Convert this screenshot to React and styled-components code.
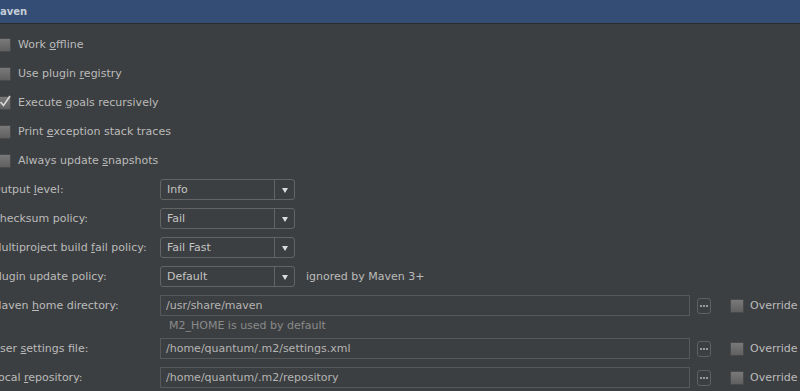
import React from "react";
import styled, { createGlobalStyle } from "styled-components";

const GlobalStyle = createGlobalStyle`
  html, body {
    margin: 0;
    padding: 0;
    background: #3c3f41;
    overflow: hidden;
  }
  body {
    font-family: "DejaVu Sans", "Liberation Sans", sans-serif;
    font-size: 11px;
    color: #bbbbbb;
  }
`;

const Page = styled.div`
  width: 800px;
  height: 391px;
  overflow: hidden;
  background: #3c3f41;
`;

const TitleBar = styled.div`
  height: 23px;
  background: #344d74;
  border-bottom: 1px solid #2a2c2e;
  display: flex;
  align-items: center;
`;

const Title = styled.span`
  margin-left: -10px;
  margin-top: -1px;
  font-weight: bold;
  font-size: 10px;
  color: #c6cdd8;
`;

const Content = styled.div`
  margin-left: -8px;
  padding-top: 6px;
`;

const CheckRow = styled.div`
  height: 29px;
  display: flex;
  align-items: center;
  gap: 7px;
  padding-left: 5px;
`;

const Box = styled.span`
  position: relative;
  width: 14px;
  height: 14px;
  box-sizing: border-box;
  border: 1px solid #4a4a4a;
  border-radius: 1px;
  background: linear-gradient(#797979, #606060);
  flex: none;
`;

const Tick = styled.svg`
  position: absolute;
  left: 0;
  top: -3px;
`;

const FormRow = styled.div`
  height: 29px;
  display: flex;
  align-items: center;
`;

const Label = styled.div`
  width: 168px;
  flex: none;
  white-space: nowrap;
`;

const Select = styled.div`
  width: 135px;
  height: 21px;
  box-sizing: border-box;
  border: 1px solid #626466;
  border-radius: 3px;
  display: flex;
  align-items: center;
`;

const SelectValue = styled.div`
  flex: 1;
  padding-left: 6px;
  color: #c4c4c4;
`;

const SelectArrow = styled.div`
  width: 19px;
  height: 100%;
  border-left: 1px solid #626466;
  display: flex;
  align-items: center;
  justify-content: center;
  &::after {
    content: "";
    margin-top: 2px;
    border-left: 3.5px solid transparent;
    border-right: 3.5px solid transparent;
    border-top: 5px solid #dcdcdc;
  }
`;

const Note = styled.span`
  margin-left: 11px;
`;

const PathField = styled.div`
  width: 530px;
  height: 21px;
  box-sizing: border-box;
  border: 1px solid #56585a;
  display: flex;
  align-items: center;
  padding-left: 5px;
  color: #b4b4b4;
  flex: none;
`;

const BrowseButton = styled.div`
  margin-left: 7px;
  width: 14px;
  height: 16px;
  box-sizing: border-box;
  border: 1px solid #5e6062;
  border-radius: 3px;
  display: flex;
  align-items: center;
  justify-content: center;
  gap: 1px;
  flex: none;
`;

const Dot = styled.span`
  width: 2px;
  height: 2px;
  background: #9a9a9a;
`;

const Override = styled.div`
  margin-left: 19px;
  display: flex;
  align-items: center;
  gap: 6px;
  white-space: nowrap;
`;

const Hint = styled.div`
  height: 14px;
  line-height: 12px;
  padding-left: 177px;
  color: #8a8a8a;
`;

function Checkbox({ checked }) {
  return (
    <Box>
      {checked && (
        <Tick width="14" height="14" viewBox="0 0 14 14">
          <path d="M2.5 8 L5.5 11.5 L12 2" fill="none" stroke="#d8d8d8" strokeWidth="1.6" />
        </Tick>
      )}
    </Box>
  );
}

const checks = [
  { label: ["Work ", "o", "ffline"] },
  { label: ["Use plugin ", "r", "egistry"] },
  { label: ["Execute ", "g", "oals recursively"], checked: true },
  { label: ["Print ", "e", "xception stack traces"] },
  { label: ["Always update ", "s", "napshots"] },
];

const selects = [
  { label: ["Output ", "l", "evel:"], value: "Info" },
  { label: ["Checksum policy:", "", ""], value: "Fail" },
  { label: ["Multiproject build ", "f", "ail policy:"], value: "Fail Fast" },
  { label: ["Plugin update policy:", "", ""], value: "Default", note: "ignored by Maven 3+" },
];

const paths = [
  { label: ["Maven ", "h", "ome directory:"], value: "/usr/share/maven", hint: "M2_HOME is used by default" },
  { label: ["User ", "s", "ettings file:"], value: "/home/quantum/.m2/settings.xml" },
  { label: ["Local ", "r", "epository:"], value: "/home/quantum/.m2/repository" },
];

function Mnemonic({ parts }) {
  return (
    <>
      {parts[0]}
      {parts[1] && <u>{parts[1]}</u>}
      {parts[2]}
    </>
  );
}

export default function App() {
  return (
    <Page>
      <GlobalStyle />
      <TitleBar>
        <Title>Maven</Title>
      </TitleBar>
      <Content>
        {checks.map((c, i) => (
          <CheckRow key={i}>
            <Checkbox checked={c.checked} />
            <span>
              <Mnemonic parts={c.label} />
            </span>
          </CheckRow>
        ))}
        {selects.map((s, i) => (
          <FormRow key={i}>
            <Label>
              <Mnemonic parts={s.label} />
            </Label>
            <Select>
              <SelectValue>{s.value}</SelectValue>
              <SelectArrow />
            </Select>
            {s.note && <Note>{s.note}</Note>}
          </FormRow>
        ))}
        {paths.map((p, i) => (
          <React.Fragment key={i}>
            <FormRow>
              <Label>
                <Mnemonic parts={p.label} />
              </Label>
              <PathField>{p.value}</PathField>
              <BrowseButton>
                <Dot />
                <Dot />
                <Dot />
              </BrowseButton>
              <Override>
                <Checkbox />
                <span>Override</span>
              </Override>
            </FormRow>
            {p.hint && <Hint>{p.hint}</Hint>}
          </React.Fragment>
        ))}
      </Content>
    </Page>
  );
}
